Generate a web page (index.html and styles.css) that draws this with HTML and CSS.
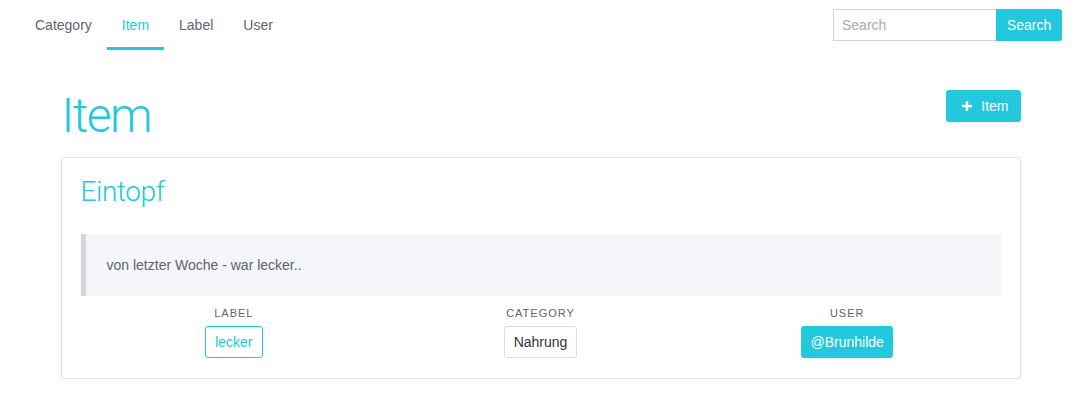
FILE: index.html
```html
<!DOCTYPE html>
<html lang="en">
<head>
  <meta charset="UTF-8">
  <meta name="viewport" content="width=device-width, initial-scale=1.0">
  <title>Item</title>
  <link rel="stylesheet" href="styles.css">
</head>
<body>
  <!-- Top navigation -->
  <nav class="navbar">
    <ul class="nav-links">
      <li><a href="#">Category</a></li>
      <li><a href="#" class="active">Item</a></li>
      <li><a href="#">Label</a></li>
      <li><a href="#">User</a></li>
    </ul>
    <form class="search">
      <input type="text" placeholder="Search">
      <button type="button">Search</button>
    </form>
  </nav>

  <div class="container">
    <div class="page-header">
      <h1>Item</h1>
      <button class="btn-add">
        <svg width="10" height="10" viewBox="0 0 10 10"><path d="M3.8 0h2.4v3.8H10v2.4H6.2V10H3.8V6.2H0V3.8h3.8z" fill="#fff"/></svg>
        Item
      </button>
    </div>

    <!-- Item card -->
    <div class="card">
      <h2>Eintopf</h2>
      <blockquote>von letzter Woche - war lecker..</blockquote>
      <div class="meta">
        <div class="meta-col">
          <span class="meta-title">Label</span>
          <span class="tag tag-outline">lecker</span>
        </div>
        <div class="meta-col">
          <span class="meta-title">Category</span>
          <span class="tag tag-plain">Nahrung</span>
        </div>
        <div class="meta-col">
          <span class="meta-title">User</span>
          <span class="tag tag-filled">@Brunhilde</span>
        </div>
      </div>
    </div>
  </div>
</body>
</html>
```

FILE: styles.css
```css
body {
  margin: 0;
  font-family: "Liberation Sans", Arial, sans-serif;
  font-size: 14px;
  color: #333;
  background-color: #fff;
}
.navbar {
  display: flex;
  justify-content: space-between;
  align-items: flex-start;
  height: 50px;
  padding: 0 19px 0 20px;
}
.nav-links {
  display: flex;
  list-style: none;
  margin: 0;
  padding: 0;
  height: 50px;
}
.nav-links a {
  display: flex;
  align-items: center;
  height: 44px;
  padding: 3px 15px 0;
  border-bottom: 3px solid transparent;
  color: #5f6370;
  text-decoration: none;
}
.nav-links a.active {
  color: #22c8dc;
  border-bottom-color: #22c8dc;
}
.search {
  display: flex;
  margin: 9px 0 0;
}
.search input {
  width: 163px;
  height: 32px;
  box-sizing: border-box;
  padding: 0 8px;
  border: 1px solid #d5d5d5;
  border-right: none;
  font-family: inherit;
  font-size: 14px;
  outline: none;
}
.search input::placeholder {
  color: #aaa;
}
.search button {
  width: 66px;
  height: 32px;
  border: none;
  border-radius: 0 3px 3px 0;
  background-color: #22c8dc;
  color: #fff;
  font-family: inherit;
  font-size: 14px;
}
.container {
  width: 960px;
  margin: 0 auto;
}
.page-header {
  display: flex;
  justify-content: space-between;
  align-items: flex-start;
  height: 107px;
}
.page-header h1 {
  margin: 36px 0 0 1px;
  font-family: Roboto, sans-serif;
  font-weight: 300;
  font-size: 48px;
  line-height: 60px;
  letter-spacing: -1.5px;
  color: #22c8dc;
}
.btn-add {
  display: flex;
  align-items: center;
  gap: 9px;
  height: 32px;
  margin-top: 40px;
  padding: 0 12px 0 16px;
  border: none;
  border-radius: 3px;
  background-color: #22c8dc;
  color: #fff;
  font-family: inherit;
  font-size: 14px;
}
.card {
  padding: 18px 19px 20px 19px;
  border: 1px solid #e0e0e0;
  border-radius: 4px;
  box-shadow: 0 1px 2px rgba(0, 0, 0, 0.12);
}
.card h2 {
  margin: 0;
  font-family: Roboto, sans-serif;
  font-weight: 300;
  font-size: 28px;
  line-height: 32px;
  letter-spacing: -0.4px;
  color: #22c8dc;
}
blockquote {
  margin: 26px 0 0;
  padding: 23px 20px 23px 21px;
  border-left: 5px solid #d4d6dc;
  background-color: #f5f6fa;
  color: #5f6370;
  line-height: 16px;
}
.meta {
  display: grid;
  grid-template-columns: 1fr 1fr 1fr;
  margin-top: 11px;
}
.meta-col {
  display: flex;
  flex-direction: column;
  align-items: center;
  gap: 6px;
}
.meta-title {
  font-size: 11px;
  line-height: 13px;
  letter-spacing: 1px;
  text-transform: uppercase;
  color: #5f6370;
}
.tag {
  display: flex;
  align-items: center;
  height: 32px;
  box-sizing: border-box;
  padding: 0 9px;
  border-radius: 3px;
}
.tag-outline {
  border: 1px solid #22c8dc;
  color: #22c8dc;
}
.tag-plain {
  border: 1px solid #dcdcdc;
  color: #333;
}
.tag-filled {
  background-color: #22c8dc;
  color: #fff;
}
```
